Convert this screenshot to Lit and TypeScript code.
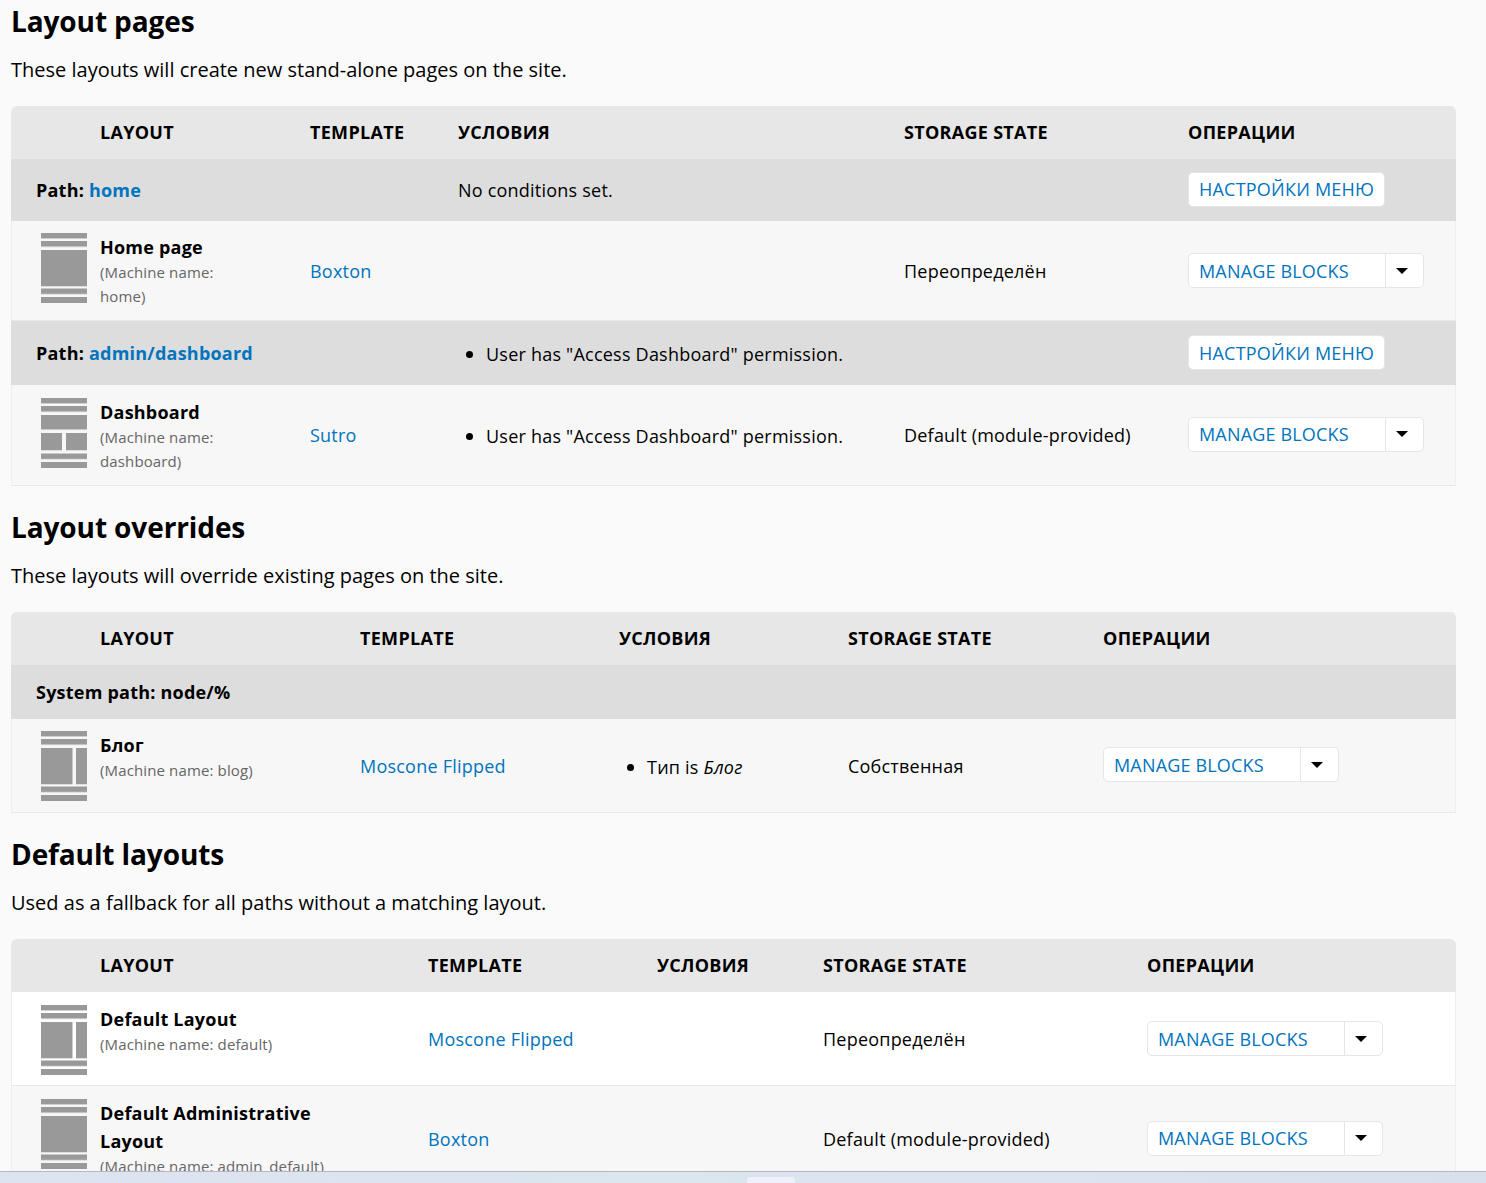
import { LitElement, html, css, svg } from "lit";
import { customElement } from "lit/decorators.js";

type Kind = "single" | "dash" | "flip";

const bar = (y: number, h: number, x = 0, w = 46) =>
  svg`<rect x=${x} y=${y} width=${w} height=${h} fill="#999"></rect><rect x=${x} y=${y + h} width=${w} height="0.6" fill="#ccc"></rect>`;

const icon = (k: Kind) => html`<svg class="ico" width="46" height="70" viewBox="0 0 46 70">
  ${bar(0, 5.4)}${bar(8, 5.6)}
  ${k === "single" ? bar(17, 36) : ""}
  ${k === "flip" ? svg`${bar(17, 36, 0, 31.5)}${bar(17, 36, 35, 11)}` : ""}
  ${k === "dash" ? svg`${bar(17, 14.5)}${bar(35, 17, 0, 21)}${bar(35, 17, 25, 21)}` : ""}
  ${bar(55.5, 5.4)}${bar(64, 6)}
</svg>`;

@customElement("app-root")
export class AppRoot extends LitElement {
  static styles = css`
    :host { display: block; position: relative; height: 1183px; overflow: hidden; background: #fafafa; color: #000; font-family: "Open Sans", sans-serif; font-size: 18px; line-height: 28px; letter-spacing: 0.22px; }
    .page { padding: 3px 30px 0 11px; }
    h2 { margin: 0 0 17px; font-size: 28px; line-height: 36px; font-weight: 700; letter-spacing: -0.1px; }
    p { margin: 0 0 22px; font-size: 20px; letter-spacing: 0; }
    section { margin-bottom: 23px; }
    table { width: 1445px; table-layout: fixed; border-collapse: separate; border-spacing: 0; }
    th { text-align: left; background: #e7e7e7; height: 53px; padding: 0 0 2px; box-sizing: border-box; font-weight: 700; text-transform: uppercase; vertical-align: middle; letter-spacing: 0.3px; }
    th:first-child { padding-left: 89px; border-top-left-radius: 6px; }
    th:last-child { border-top-right-radius: 6px; }
    td { padding: 0; vertical-align: middle; background: #f7f7f7; border-bottom: 1px solid #e8e8e8; }
    td:first-child { border-left: 1px solid #eee; }
    td:last-child { border-right: 1px solid #eee; }
    tr.white td { background: #fff; }
    tr.group td { background: #ddd; border: 0; height: 62px; font-weight: 400; }
    tr.group td:first-child { padding-left: 25px; font-weight: 700; }
    tr.group.tall td { height: 64px; }
    tr.group.short td { height: 54px; }
    .lay { display: flex; gap: 13px; padding: 12px 60px 12px 29px; align-items: flex-start; }
    .lay.p11 { padding-bottom: 11px; }
    .lay.p13 { padding-top: 13px; }
    .lay.p1310 { padding-top: 13px; padding-bottom: 10px; }
    .lay.p1314 { padding-top: 13px; padding-bottom: 14px; }
    .ico { flex: none; display: block; }
    .name { font-weight: 700; }
    .mach { font-size: 15px; line-height: 23.5px; color: #666; letter-spacing: 0.13px; }
    a { color: #0074bd; text-decoration: none; }
    tr.group a { font-weight: 700; }
    ul { margin: 2px 0 0; padding: 0 0 0 28px; }
    li::marker { font-size: 19px; }
    .btn { display: inline-flex; box-sizing: border-box; height: 35px; align-items: center; background: #fff; border: 1px solid #e6e6e6; border-radius: 5px; color: #0074bd; text-transform: uppercase; vertical-align: middle; }
    tr.group .btn, .btn.up { margin-bottom: 2px; }
    tr.group.tall .btn { margin-bottom: 1px; }
    .btn .lbl { padding: 0 10px; }
    .btn.drop .lbl { width: 196px; box-sizing: border-box; letter-spacing: 0.17px; }
    .btn .car { width: 38px; align-self: stretch; display: flex; align-items: center; justify-content: center; border-left: 1px solid #e6e6e6; box-sizing: border-box; }
    .car i { display: block; width: 0; height: 0; border: 6px solid transparent; border-top-color: #000; border-bottom: 0; margin: 0 6px 0 0; }
    .taskbar { position: absolute; left: 0; right: 0; top: 1171px; height: 12px; background: linear-gradient(90deg, #dde3f1, #dce6ee 45%, #dde3f1 70%, #d9e0ec); border-top: 1px solid #b5b7c2; box-sizing: border-box; }
    .tab { position: absolute; left: 747px; top: 5px; width: 48px; height: 7px; background: #eef1fa; border-radius: 4px 4px 0 0; }
  `;

  private head(w: number[]) {
    return html`<colgroup>${w.map((x) => html`<col style="width:${x}px" />`)}</colgroup>
      <thead><tr><th>Layout</th><th>Template</th><th>Условия</th><th>Storage state</th><th>Операции</th></tr></thead>`;
  }
  private layout(k: Kind, name: string, mach: string, pad = "") {
    return html`<div class="lay ${pad}">${icon(k)}<div><div class="name">${name}</div><div class="mach">${mach}</div></div></div>`;
  }
  private manage(up = false) {
    return html`<span class="btn drop ${up ? "up" : ""}"><span class="lbl">Manage blocks</span><span class="car"><i></i></span></span>`;
  }
  private menu() {
    return html`<span class="btn"><span class="lbl">Настройки меню</span></span>`;
  }
  private perm() {
    return html`<ul><li>User has "Access Dashboard" permission.</li></ul>`;
  }

  render() {
    return html`<div class="page">
      <section>
        <h2>Layout pages</h2>
        <p>These layouts will create new stand-alone pages on the site.</p>
        <table>
          ${this.head([299, 148, 446, 284, 268])}
          <tbody>
            <tr class="group"><td colspan="2">Path: <a href="#">home</a></td><td>No conditions set.</td><td></td><td>${this.menu()}</td></tr>
            <tr><td>${this.layout("single", "Home page", "(Machine name: home)")}</td><td><a href="#">Boxton</a></td><td></td><td>Переопределён</td><td>${this.manage()}</td></tr>
            <tr class="group tall"><td colspan="2">Path: <a href="#">admin/dashboard</a></td><td>${this.perm()}</td><td></td><td>${this.menu()}</td></tr>
            <tr><td>${this.layout("dash", "Dashboard", "(Machine name: dashboard)", "p13")}</td><td><a href="#">Sutro</a></td><td>${this.perm()}</td><td>Default (module-provided)</td><td>${this.manage(true)}</td></tr>
          </tbody>
        </table>
      </section>
      <section>
        <h2>Layout overrides</h2>
        <p>These layouts will override existing pages on the site.</p>
        <table>
          ${this.head([349, 259, 229, 255, 353])}
          <tbody>
            <tr class="group short"><td colspan="5">System path: node/%</td></tr>
            <tr><td>${this.layout("flip", "Блог", "(Machine name: blog)", "p11")}</td><td><a href="#">Moscone Flipped</a></td><td><ul class="flat"><li>Тип is <em>Блог</em></li></ul></td><td>Собственная</td><td>${this.manage(true)}</td></tr>
          </tbody>
        </table>
      </section>
      <section>
        <h2>Default layouts</h2>
        <p>Used as a fallback for all paths without a matching layout.</p>
        <table>
          ${this.head([417, 229, 166, 324, 309])}
          <tbody>
            <tr class="white"><td>${this.layout("flip", "Default Layout", "(Machine name: default)", "p1310")}</td><td><a href="#">Moscone Flipped</a></td><td></td><td>Переопределён</td><td>${this.manage()}</td></tr>
            <tr><td>${this.layout("single", "Default Administrative Layout", "(Machine name: admin_default)", "p1314")}</td><td><a href="#">Boxton</a></td><td></td><td>Default (module-provided)</td><td>${this.manage(true)}</td></tr>
          </tbody>
        </table>
      </section>
    </div>
    <div class="taskbar"><div class="tab"></div></div>`;
  }
}
